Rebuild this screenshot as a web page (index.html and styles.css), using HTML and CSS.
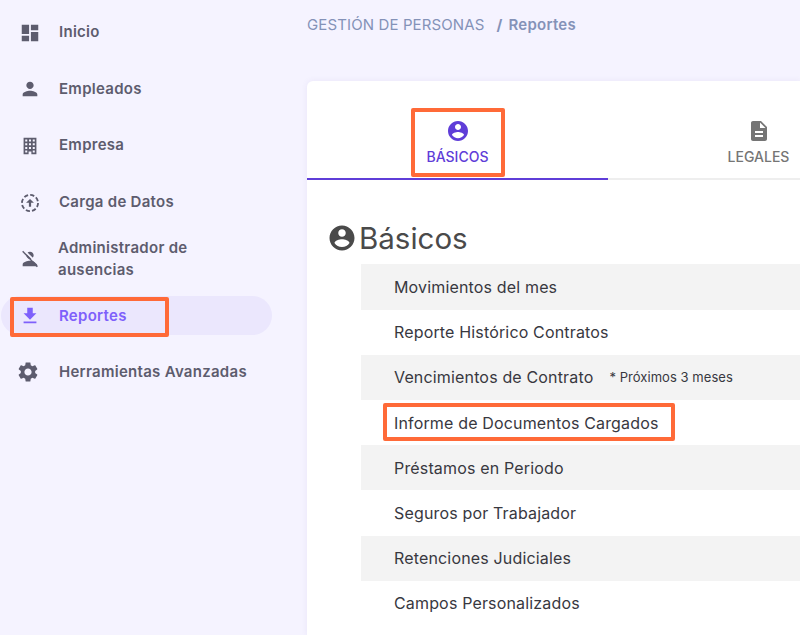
FILE: index.html
```html
<!DOCTYPE html>
<html lang="es">
<head>
<meta charset="utf-8">
<title>Reportes</title>
<link rel="stylesheet" href="styles.css">
</head>
<body>
<div class="app">
  <nav class="sidebar">
    <a class="nav-item"><svg class="nav-icon" viewBox="0 0 24 24"><path d="M3 13h8V3H3v10zm0 8h8v-6H3v6zm10 0h8V11h-8v10zm0-18v6h8V3h-8z"/></svg><span>Inicio</span></a>
    <a class="nav-item"><svg class="nav-icon" viewBox="0 0 24 24"><path d="M12 12c2.21 0 4-1.79 4-4s-1.79-4-4-4-4 1.79-4 4 1.79 4 4 4zm0 2c-2.67 0-8 1.34-8 4v2h16v-2c0-2.66-5.33-4-8-4z"/></svg><span>Empleados</span></a>
    <a class="nav-item"><svg class="nav-icon" viewBox="0 0 24 24"><path fill-rule="evenodd" d="M5 3h14v18h-5.500v-3h-3v3H5zM6.800 5v2.200H9V5zm4.100 0v2.200h2.200V5zm4.100 0v2.200h2.200V5zM6.800 9v2.200H9V9zm4.100 0v2.200h2.200V9zm4.100 0v2.200h2.200V9zM6.800 13v2.200H9V13zm4.100 0v2.200h2.200V13zm4.100 0v2.200h2.200V13zM6.800 17v2.200H9V17zm8.200 0v2.200h2.200V17z"/></svg><span>Empresa</span></a>
    <a class="nav-item"><svg class="nav-icon" viewBox="0 0 24 24"><circle class="dashed" cx="12" cy="12" r="8.800"/><path d="M12 7.500l4.300 4.300h-3.100v4.400h-2.400v-4.400H7.700z"/></svg><span>Carga de Datos</span></a>
    <a class="nav-item nav-item-tight"><svg class="nav-icon" viewBox="0 0 24 24"><path d="M12 12c2.210 0 4-1.790 4-4s-1.790-4-4-4-4 1.790-4 4 1.790 4 4 4zm0 2c-2.670 0-8 1.340-8 4v2h16v-2c0-2.660-5.330-4-8-4z"/><path class="slash-gap" d="M5.500 2.500l16 16"/><path class="slash" d="M4 3.500l16 17"/></svg><span>Administrador de ausencias</span></a>
    <a class="nav-item nav-item-active"><svg class="nav-icon" viewBox="0 0 24 24"><path d="M19 9h-4V3H9v6H5l7 7 7-7zM5 18v2h14v-2H5z"/></svg><span>Reportes</span></a>
    <a class="nav-item"><svg class="nav-icon nav-icon-gear" viewBox="0 0 24 24"><path d="M19.140 12.940c.04-.3.06-.61.06-.94 0-.32-.02-.64-.07-.94l2.030-1.580c.18-.14.23-.41.12-.61l-1.920-3.320c-.12-.22-.37-.29-.59-.22l-2.390.96c-.5-.38-1.030-.7-1.620-.94l-.36-2.540c-.04-.24-.24-.41-.48-.41h-3.840c-.24 0-.43.17-.47.41l-.36 2.540c-.59.24-1.130.57-1.620.94l-2.390-.96c-.22-.08-.47 0-.59.22L2.740 8.870c-.12.21-.08.47.12.61l2.030 1.580c-.05.3-.09.63-.09.94s.02.64.07.94l-2.030 1.580c-.18.14-.23.41-.12.61l1.920 3.320c.12.22.37.29.59.22l2.390-.96c.5.38 1.030.7 1.620.94l.36 2.540c.05.24.24.41.48.41h3.840c.24 0 .44-.17.47-.41l.36-2.540c.59-.24 1.130-.56 1.620-.94l2.390.96c.22.08.47 0 .59-.22l1.920-3.320c.12-.22.07-.47-.12-.61l-2.010-1.580zM12 15.600c-1.980 0-3.600-1.620-3.600-3.600s1.620-3.600 3.600-3.600 3.600 1.620 3.600 3.600-1.620 3.600-3.600 3.600z"/></svg><span>Herramientas Avanzadas</span></a>
  </nav>
  <main class="main">
    <div class="breadcrumb"><span>GESTIÓN DE PERSONAS</span><span class="crumb-sep">/</span><strong>Reportes</strong></div>
    <section class="card">
      <div class="tabs">
        <div class="tab tab-active"><svg class="tab-icon" viewBox="0 0 24 24"><path d="M12 2C6.480 2 2 6.480 2 12s4.480 10 10 10 10-4.480 10-10S17.520 2 12 2zm0 3c1.660 0 3 1.340 3 3s-1.340 3-3 3-3-1.340-3-3 1.340-3 3-3zm0 14.200c-2.500 0-4.710-1.280-6-3.220.03-1.990 4-3.080 6-3.080 1.990 0 5.970 1.090 6 3.080-1.290 1.940-3.500 3.220-6 3.220z"/></svg><span>BÁSICOS</span></div>
        <div class="tab"><svg class="tab-icon" viewBox="0 0 24 24"><path d="M14 2H6c-1.100 0-1.990.9-1.990 2L4 20c0 1.100.89 2 1.990 2H18c1.100 0 2-.9 2-2V8l-6-6zm2 16H8v-2h8v2zm0-4H8v-2h8v2zm-3-5V3.500L18.500 9H13z"/></svg><span>LEGALES</span></div>
      </div>
      <h1 class="title"><svg class="title-icon" viewBox="0 0 24 24"><path d="M12 2C6.480 2 2 6.480 2 12s4.480 10 10 10 10-4.480 10-10S17.520 2 12 2zm0 3c1.660 0 3 1.340 3 3s-1.340 3-3 3-3-1.340-3-3 1.340-3 3-3zm0 14.200c-2.500 0-4.710-1.280-6-3.220.03-1.990 4-3.080 6-3.080 1.990 0 5.970 1.090 6 3.080-1.290 1.940-3.500 3.220-6 3.220z"/></svg><span>Básicos</span></h1>
      <ul class="rows">
        <li class="row">Movimientos del mes</li>
        <li class="row">Reporte Histórico Contratos</li>
        <li class="row">Vencimientos de Contrato<small class="row-note">* Próximos 3 meses</small></li>
        <li class="row">Informe de Documentos Cargados</li>
        <li class="row">Préstamos en Periodo</li>
        <li class="row">Seguros por Trabajador</li>
        <li class="row">Retenciones Judiciales</li>
        <li class="row">Campos Personalizados</li>
      </ul>
    </section>
  </main>
</div>
<div class="mark mark-nav"></div>
<div class="mark mark-tab"></div>
<div class="mark mark-row"></div>
</body>
</html>
```

FILE: styles.css
```css
* { box-sizing: border-box; }
html, body { margin: 0; height: 100%; overflow: hidden; }
body { background: #f5f3ff; font-family: Inter, "Liberation Sans", sans-serif; position: relative; }
.app { display: flex; height: 635px; }

.sidebar { width: 307px; flex: none; padding: 12.600px 35px 0 1px; display: flex; flex-direction: column; gap: 17.700px; }
.nav-item { height: 39px; flex: none; display: flex; align-items: center; padding-left: 18px; border-radius: 20px; color: #5d5c6e; font-size: 15px; font-weight: 600; line-height: 22px; letter-spacing: .28px; }
.nav-item span { margin-left: 18px; max-width: 195px; }
.nav-item-tight span { margin-left: 17px; max-width: 150px; }
.nav-item-active { background: #ebe7fd; color: #7e60fb; }
.nav-icon { width: 22px; height: 22px; flex: none; fill: currentColor; margin-top: 1px; }
.nav-icon-gear { width: 24px; height: 24px; margin: 0 1px 0 -3px; }
.dashed { fill: none; stroke: currentColor; stroke-width: 2; stroke-dasharray: 4.600 2.300; }
.slash-gap { fill: none; stroke: #f5f3ff; stroke-width: 2; }
.slash { fill: none; stroke: currentColor; stroke-width: 1.500; }

.main { flex: 1; min-width: 0; display: flex; flex-direction: column; }
.breadcrumb { display: flex; align-items: center; height: 49px; color: #8492b8; font-size: 15px; letter-spacing: .12px; flex: none; }
.crumb-sep { margin: 0 6px 0 12px; font-weight: 700; }
.breadcrumb strong { font-weight: 600; letter-spacing: .25px; }

.card { margin-top: 32px; flex: 1; background: #fff; border-radius: 6px 0 0 0; box-shadow: 0 0 6px rgba(90, 70, 160, .08); overflow: hidden; }
.tabs { display: flex; height: 99px; border-bottom: 2px solid #eeeeee; }
.tab { width: 301px; flex: none; display: flex; flex-direction: column; align-items: center; padding-top: 38px; margin-bottom: -2px; color: #757575; font-size: 14px; font-weight: 500; gap: 6px; line-height: 16px; }
.tab-active { color: #5f3dd8; border-bottom: 2px solid #5f3dd8; }
.tab-icon { width: 24px; height: 24px; flex: none; fill: currentColor; }

.title { margin: 35px 0 3.400px 20px; height: 46px; display: flex; align-items: center; color: #4a4a4a; font-size: 29.500px; font-weight: 400; gap: 2px; }
.title-icon { width: 30px; height: 30px; fill: currentColor; }
.rows { list-style: none; margin: 0 0 0 54px; padding: 0; }
.row { height: 45.200px; display: flex; align-items: center; padding-left: 33px; color: #38383f; font-size: 16px; letter-spacing: .16px; }
.row:nth-child(odd) { background: #f3f3f3; }
.row-note { margin-left: 16px; font-size: 13px; letter-spacing: .05px; }

.mark { position: absolute; border: 4px solid #ff6a38; border-radius: 2px; }
.mark-nav { left: 10px; top: 297px; width: 159px; height: 40px; }
.mark-tab { left: 411px; top: 108px; width: 94px; height: 69px; }
.mark-row { left: 383px; top: 403px; width: 292px; height: 38px; }
```
